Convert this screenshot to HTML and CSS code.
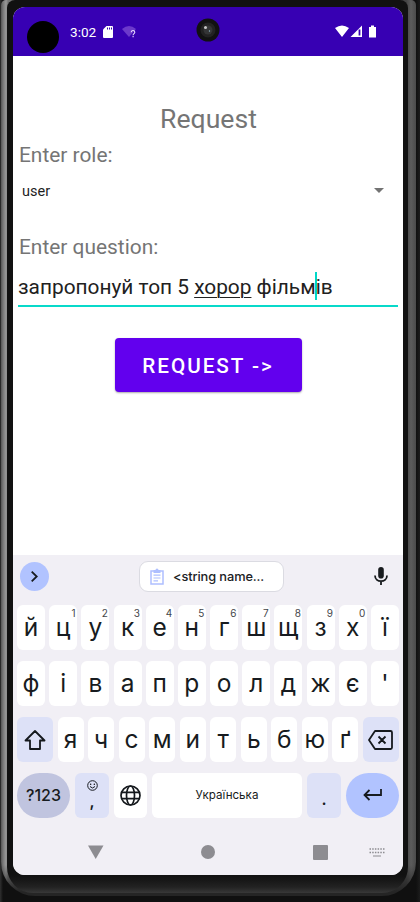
FILE: index.html
```html
<!DOCTYPE html>
<html lang="uk">
<head>
<meta charset="utf-8">
<title>Request</title>
<link rel="stylesheet" href="styles.css">
</head>
<body>
<div class="device"><div class="rim"><div class="bezel">
<main class="screen">
  <header class="status">
    <span class="hole"></span>
    <span class="time">3:02</span>
    <svg class="sd" width="10" height="12" viewBox="0 0 10 12"><path d="M3.5 0H9a1 1 0 0 1 1 1v10a1 1 0 0 1-1 1H1a1 1 0 0 1-1-1V3.500z" fill="#fff"/><path d="M4.500 1.500v2M6.500 1.500v2M8.500 1.500v2" stroke="#3700b3"/></svg>
    <svg class="wifi-off" width="15" height="12" viewBox="0 0 15 12"><path d="M0 3Q7-3 14 3L7 11z" fill="#6c39cb"/><path d="M9.300 6.200c0-2.300 3.500-2.100 3.500 0 0 1.500-1.700 1.400-1.700 3M11.100 10v1.200" fill="none" stroke="#e8dcff" stroke-width="1.100"/></svg>
    <svg class="camera" width="24" height="24" viewBox="0 0 24 24"><circle cx="12" cy="12" r="11.500" fill="#111"/><circle cx="12" cy="12" r="7.500" fill="#222"/><circle cx="12" cy="12" r="4.500" fill="#343536"/><circle cx="9.500" cy="9.500" r="1.500" fill="#c5c5c5"/><circle cx="13.500" cy="13" r=".7" fill="#90b9c8"/></svg>
    <svg class="signals" width="42" height="13" viewBox="0 0 42 13"><path d="M0 3Q7-2 14 3L7 12zM15.500 12L27 .500V12zM34 2h2V.500h3V2h2v10.500h-7z" fill="#fff"/><path d="M24.500 4.500v6" stroke="#3700b3" stroke-width="1.800"/></svg>
  </header>
  <section class="content">
    <h1>Request</h1>
    <p class="label">Enter role:</p>
    <div class="select"><span>user</span><svg width="10" height="5" viewBox="0 0 10 5"><path d="M0 0h10L5 5z" fill="#737373"/></svg></div>
    <p class="label question">Enter question:</p>
    <div class="field">запропонуй топ 5 <span class="spell">хорор</span> фільм<i class="caret"></i>ів</div>
    <button class="request">REQUEST -&gt;</button>
  </section>
  <section class="keyboard">
    <div class="tools">
      <span class="expand"><svg width="29" height="29" viewBox="0 0 29 29"><path d="M11.700 9.700l5 4.800-5 4.800" fill="none" stroke="#171b20" stroke-width="1.800"/></svg></span>
      <div class="clip"><svg width="14" height="17" viewBox="0 0 14 17"><path d="M1 3h12v13H1z" fill="none" stroke="#aebfff" stroke-width="1.500"/><path d="M3.500 2h2a1.500 1.500 0 0 1 3 0h2v3h-7z" fill="#aebfff"/><path d="M3.500 7.200h7M3.500 10h7M3.500 12.800H8" stroke="#aebfff" stroke-width="1.200"/></svg><span>&lt;string name...</span></div>
      <svg class="mic" width="14" height="19" viewBox="0 0 14 19"><rect x="4.200" y="0" width="5.600" height="11.500" rx="2.800" fill="#181b1e"/><path d="M1 8.500c0 7.500 12 7.500 12 0M7 14v4" fill="none" stroke="#181b1e" stroke-width="1.800"/></svg>
    </div>
    <div class="row top">
      <span class="key">й</span><span class="key">ц<sup>1</sup></span><span class="key">у<sup>2</sup></span><span class="key">к<sup>3</sup></span><span class="key">е<sup>4</sup></span><span class="key">н<sup>5</sup></span><span class="key">г<sup>6</sup></span><span class="key">ш<sup>7</sup></span><span class="key">щ<sup>8</sup></span><span class="key">з<sup>9</sup></span><span class="key">х<sup>0</sup></span><span class="key">ї</span>
    </div>
    <div class="row">
      <span class="key">ф</span><span class="key">і</span><span class="key">в</span><span class="key">а</span><span class="key">п</span><span class="key">р</span><span class="key">о</span><span class="key">л</span><span class="key">д</span><span class="key">ж</span><span class="key">є</span><span class="key">'</span>
    </div>
    <div class="row third">
      <span class="key side"><svg width="22" height="20" viewBox="0 0 22 20"><path d="M11 1l9.500 9.500H16v8.500H6v-8.500H1.500z" fill="none" stroke="#15191d" stroke-width="1.800" stroke-linejoin="round"/></svg></span><span class="key">я</span><span class="key">ч</span><span class="key">с</span><span class="key">м</span><span class="key">и</span><span class="key">т</span><span class="key">ь</span><span class="key">б</span><span class="key">ю</span><span class="key">ґ</span><span class="key side"><svg width="25" height="20" viewBox="0 0 25 20"><path d="M7 1h15.500q1.500 0 1.500 1.500v15q0 1.500-1.500 1.500H7L1 10zM10.500 6.500l7 7m0-7l-7 7" fill="none" stroke="#15191d" stroke-width="1.800" stroke-linejoin="round"/></svg></span>
    </div>
    <div class="row bottom">
      <span class="key mode">?123</span>
      <span class="key emoji"><svg width="11" height="11" viewBox="0 0 11 11"><circle cx="5.500" cy="5.500" r="4.800" fill="none" stroke="#171b20"/><circle cx="3.700" cy="4.200" r=".7"/><circle cx="7.300" cy="4.200" r=".7"/><path d="M3 6.500q2.500 3 5 0" fill="none" stroke="#171b20"/></svg><b>,</b></span>
      <span class="key globe"><svg width="21" height="21" viewBox="0 0 21 21" fill="none" stroke="#15191d" stroke-width="1.700"><circle cx="10.500" cy="10.500" r="9.500"/><ellipse cx="10.500" cy="10.500" rx="4" ry="9.500"/><path d="M1.500 7.300h18M1.500 13.700h18"/></svg></span>
      <span class="key space">Українська</span>
      <span class="key dot">.</span>
      <span class="key enter"><svg width="19" height="12" viewBox="0 0 19 12"><path d="M18 0v6H1.500M6.500 1l-5 5 5 5" fill="none" stroke="#171b20" stroke-width="1.800"/></svg></span>
    </div>
    <nav class="nav">
      <svg width="16" height="14" viewBox="0 0 16 14"><path d="M0 .500h15.500L7.700 14z" fill="#8d8c91"/></svg>
      <svg width="14" height="14" viewBox="0 0 14 14"><circle cx="7" cy="7" r="7" fill="#8d8c91"/></svg>
      <svg width="15" height="15" viewBox="0 0 15 15"><rect width="15" height="15" rx="1" fill="#8d8c91"/></svg>
      <svg width="16" height="9" viewBox="0 0 16 9"><path d="M.500 1h15M.500 4.500h15" stroke="#8d8c91" stroke-width="1.500" stroke-dasharray="1.500 1.200"/><path d="M4 8h8" stroke="#8d8c91"/></svg>
    </nav>
  </section>
</main>
</div></div></div>
</body>
</html>
```
FILE: styles.css
```css
* { box-sizing: border-box; }
body { margin: 0; background: #1a1a1a; font-family: Roboto, "Noto Sans", sans-serif; }
svg { display: block; flex: none; }
.device { width: 420px; height: 902px; overflow: hidden; padding: 0 4px 6px 1px; background: linear-gradient(90deg, #303030, #101010 3px, #101010 416px, #1c1c1c); }
.rim { height: 896px; padding: 0 8px 3px 6px; border-radius: 5px 5px 34px 34px; background: linear-gradient(transparent 865px, #252525 892px), linear-gradient(90deg, #555, #777 2px, #999 5px, #777 7px, #444 30px, #444 405px, #5c5c5c 410px, #4b4b4b 100%); }
.bezel { height: 893px; padding: 7px 5px 18px 6px; border-radius: 8px 8px 26px 26px; background: linear-gradient(#111 0, #111 875px, #171717 880px, #222 887px, #383838 893px); }
.screen { width: 390px; height: 868px; display: flex; flex-direction: column; overflow: hidden; border-radius: 12px; background: #fff; }
.status { height: 49px; display: flex; align-items: center; background: #3700b3; color: #fff; flex: none; }
.hole { width: 32px; height: 32px; margin: 11px 0 0 14px; border-radius: 50%; background: #000; }
.time { width: 29px; margin-left: 11px; font-size: 13.600px; line-height: 16px; }
.sd { margin-left: 4px; }
.wifi-off { margin-left: 9px; }
.camera { margin: -4px 0 0 59px; }
.signals { margin-left: 115px; }
.content { height: 499px; padding: 45px 5px 0; color: #757575; flex: none; }
h1 { margin: 0 0 2px 1px; text-align: center; font-size: 26.600px; line-height: 36px; font-weight: 400; }
.label { margin: 1px 0 0 1px; font-size: 20.900px; line-height: 32px; }
.select { height: 40px; padding: 0 14px 0 4px; display: flex; align-items: center; justify-content: space-between; color: #1f1f1f; font-size: 14.500px; }
.select svg { margin-top: -1px; }
.question { margin-top: 20px; }
.field { height: 44px; border-bottom: 2px solid #08d9ca; color: #212121; font-size: 20.850px; line-height: 49px; white-space: nowrap; }
.spell { text-decoration: underline; text-decoration-thickness: 1px; text-underline-offset: 3px; }
.caret { display: inline-block; width: 1.500px; height: 28px; margin: 0 -1px 0 -.5px; vertical-align: -6px; background: #00d8c8; }
.request { display: block; width: 187px; height: 54px; margin: 31px auto 0 96.500px; padding: 2px 0 0; border: 0; border-radius: 4px; background: #6200ee; color: #fff; font: 500 20.700px Roboto, sans-serif; letter-spacing: 1.950px; box-shadow: 0 1px 2px #aaa; }
.keyboard { flex: 1; padding: 0 4px; background: #f1eff5; }
.tools { height: 46px; display: flex; align-items: center; padding-left: 3px; }
.expand { width: 29px; height: 29px; margin-top: -4px; border-radius: 50%; background: #b1c3ff; }
.clip { width: 145px; height: 31px; margin: -4px 0 0 90px; display: flex; align-items: center; gap: 9px; padding: 1px 0 0 10px; border: 1px solid #dbdbe2; border-radius: 9px; background: #fff; font: 500 12.800px Inter, sans-serif; letter-spacing: -.1px; color: #202124; }
.mic { margin: -4px 0 0 90px; }
.row { height: 45px; margin-bottom: 11px; display: grid; grid-template-columns: repeat(12, 28px); justify-content: space-between; width: 382px; }
.top { margin-top: 4px; }
.key { position: relative; height: 45px; display: flex; align-items: center; justify-content: center; border-radius: 6px; background: #fff; color: #171b20; font: 24.500px Inter, "Open Sans", sans-serif; }
.key:not(.side) { padding-bottom: 1px; }
.key sup { position: absolute; top: 2px; right: 1.500px; font: 10px/13px Inter, sans-serif; color: #44464a; }
.third { grid-template-columns: 36px repeat(10, 26px) 36px; }
.key.side, .key.emoji, .key.dot { background: #dde1f7; }
.bottom { grid-template-columns: 53px 34px 33px 150px 34px 53px; margin: 0; }
.key.mode { border-radius: 23px; background: #c0c4df; font-size: 16px; font-weight: 500; }
.key.emoji { flex-direction: column; }
.emoji b { font-size: 16px; line-height: 20px; font-weight: 600; }
.key.space { font-size: 11.600px; }
.key.dot { padding-top: 7px; font-size: 16px; font-weight: 600; }
.key.enter { border-radius: 23px; background: #b1c3ff; }
.nav { display: flex; align-items: center; height: 68px; padding-left: 71px; }
.nav svg:nth-child(2) { margin-left: 97px; }
.nav svg:nth-child(3) { margin-left: 98px; }
.nav svg:nth-child(4) { margin-left: 41px; }
```
